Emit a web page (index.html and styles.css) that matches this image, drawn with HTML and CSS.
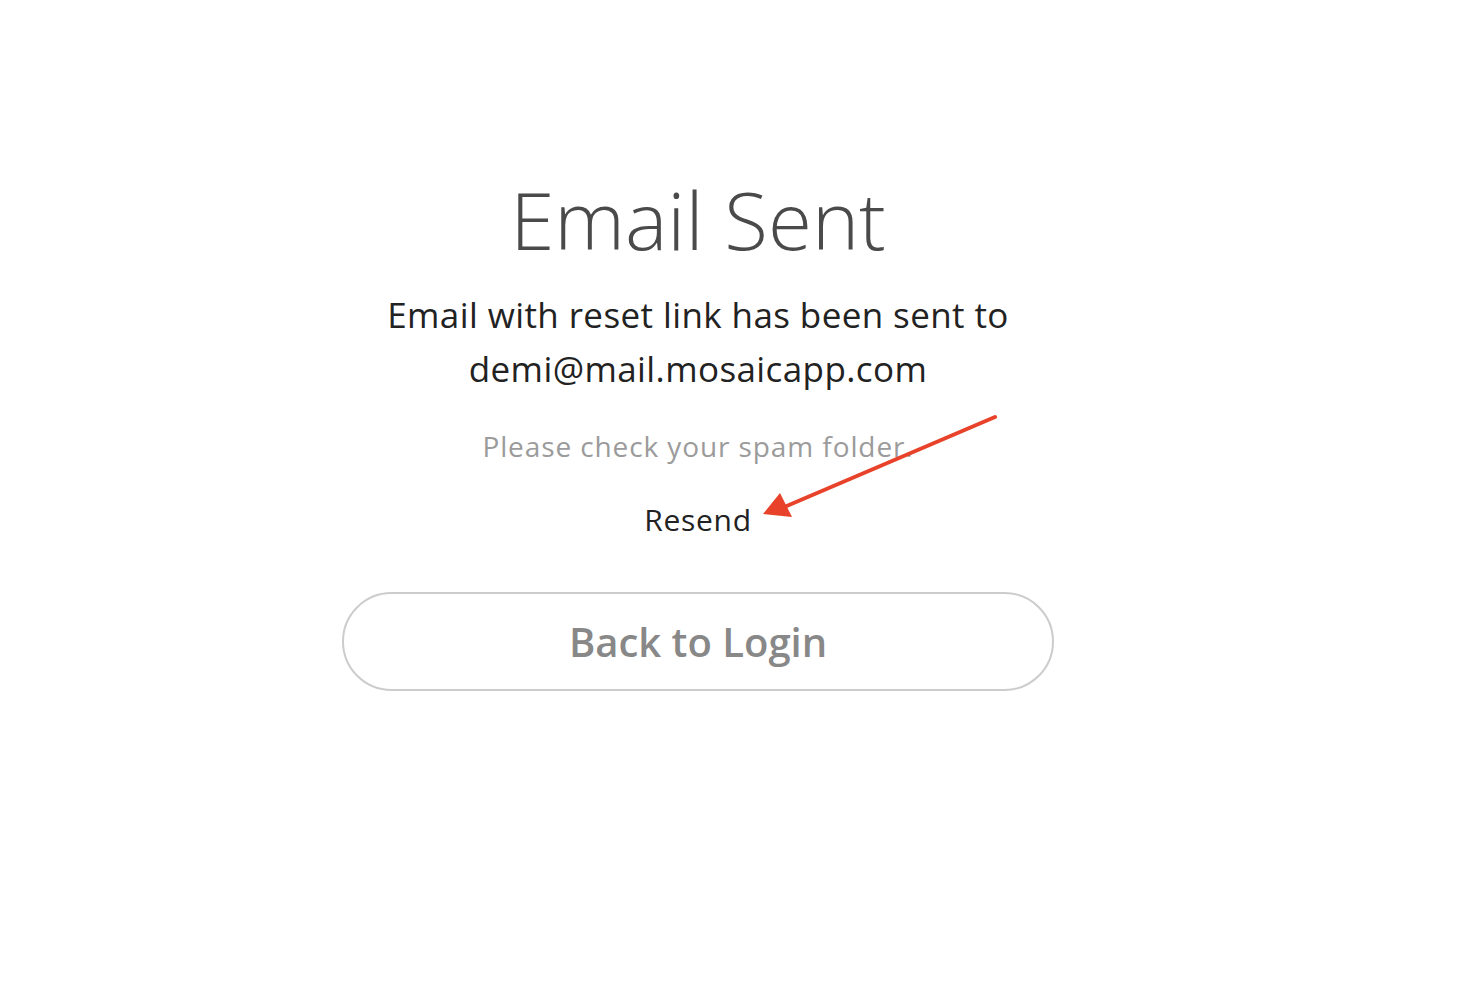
FILE: index.html
```html
<!DOCTYPE html>
<html>
<head>
<meta charset="utf-8">
<link rel="stylesheet" href="styles.css">
</head>
<body>
<main class="page">
  <section class="panel">
    <h1 class="title">Email Sent</h1>
    <p class="message">Email with reset link has been sent to<br>demi@mail.mosaicapp.com</p>
    <p class="hint">Please check your spam folder.</p>
    <a class="resend">Resend</a>
    <button class="back">Back to Login</button>
  </section>
</main>
<svg class="annotation" width="260" height="120" viewBox="0 0 260 120">
  <line x1="235" y1="7" x2="22" y2="98" stroke="#e8432a" stroke-width="4" stroke-linecap="round"/>
  <polygon points="3,104 20,83 32,107" fill="#e8432a"/>
</svg>
</body>
</html>
```
FILE: styles.css
```css
html, body {
  margin: 0;
  padding: 0;
  background: #ffffff;
}
body {
  font-family: "Open Sans", "Liberation Sans", sans-serif;
  width: 1472px;
  height: 992px;
  position: relative;
  overflow: hidden;
}
.page {
  width: 1396px;
  display: flex;
  justify-content: center;
}
.panel {
  width: 712px;
  display: flex;
  flex-direction: column;
  align-items: center;
  padding-top: 169px;
}
.title {
  margin: 0;
  font-weight: 300;
  font-size: 80px;
  line-height: 100px;
  color: #4a4a4a;
}
.message {
  margin: 19px 0 0;
  font-size: 35px;
  letter-spacing: 0.4px;
  line-height: 54px;
  color: #222;
  text-align: center;
  white-space: nowrap;
}
.hint {
  margin: 30px 0 0;
  font-size: 28px;
  letter-spacing: 0.9px;
  line-height: 40px;
  color: #9b9b9b;
}
.resend {
  margin-top: 34px;
  font-size: 30px;
  letter-spacing: 0.7px;
  line-height: 40px;
  color: #222;
}
.back {
  margin-top: 52px;
  width: 712px;
  height: 99px;
  border: 2px solid #cccccc;
  border-radius: 50px;
  background: #fff;
  font-family: "Open Sans", "Liberation Sans", sans-serif;
  font-weight: 600;
  font-size: 40px;
  color: #888888;
}
.annotation {
  position: absolute;
  left: 760px;
  top: 410px;
}
```
